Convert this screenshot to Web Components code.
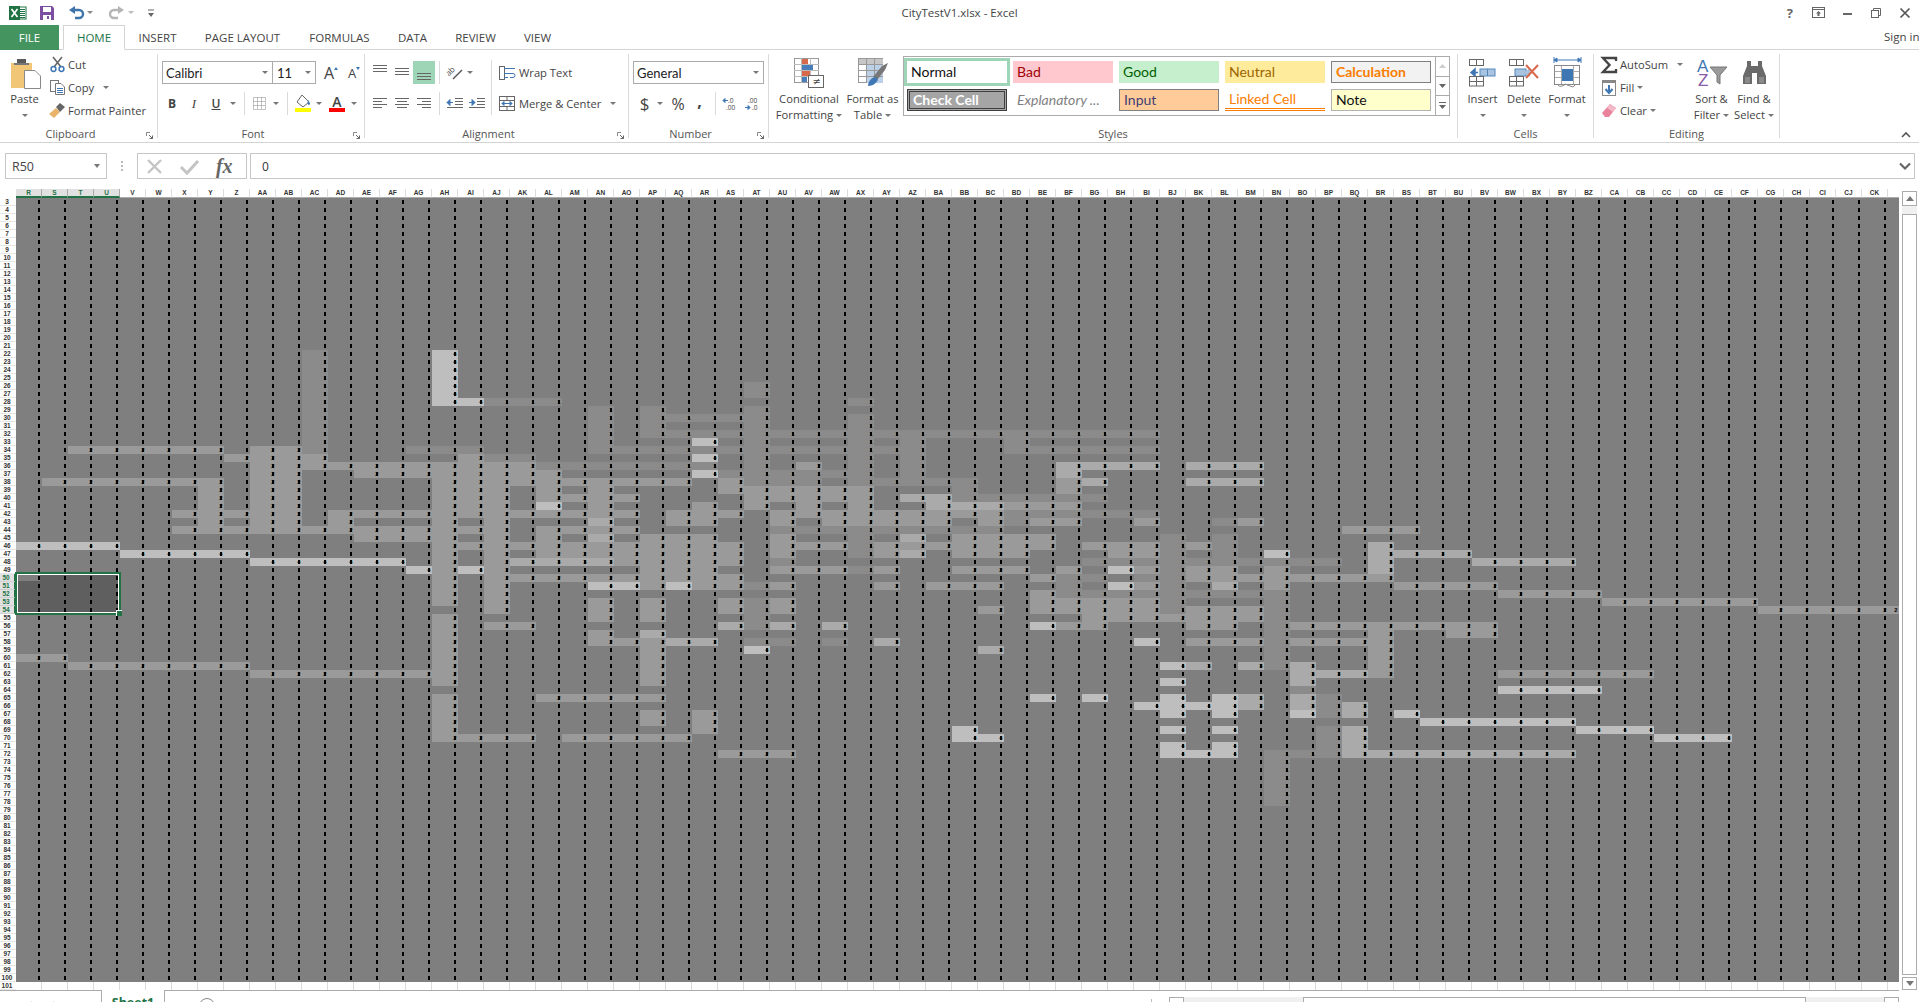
<!DOCTYPE html>
<html lang="en">
<head>
<meta charset="utf-8">
<title>CityTestV1.xlsx - Excel</title>
<style>
html,body{margin:0;padding:0;background:#fff;overflow:hidden;width:1919px;height:1002px}
body{font-family:"Open Sans","Liberation Sans",sans-serif}
</style>
</head>
<body>
<xl-app></xl-app>
<script>
const svg=(w,h,c,st='')=>`<svg width="${w}" height="${h}" viewBox="0 0 ${w} ${h}" style="display:block;overflow:visible;${st}">${c}</svg>`;
const L=(x1,y1,x2,y2,col='#666',sw=1)=>`<line x1="${x1}" y1="${y1}" x2="${x2}" y2="${y2}" stroke="${col}" stroke-width="${sw}"/>`;
const lines=(arr,col='#666')=>arr.map(a=>L(a[0],a[1]+.5,a[2],a[1]+.5,col)).join('');

class XlTitle extends HTMLElement{constructor(){super();this.attachShadow({mode:'open'}).innerHTML=`
<style>
:host{display:grid;grid-template-columns:1fr auto 1fr;align-items:center;height:25px;font:11.5px "Open Sans",sans-serif;color:#444}
.l,.r{display:flex;align-items:center}
.r{justify-content:flex-end}
.t{color:#444}
.car{width:0;height:0;border:3px solid transparent;border-top:3px solid #888;border-bottom:0}
</style>
<div class="l">
 <span style="margin-left:9px">${svg(17,14,`<rect x="7" y="1" width="10" height="12" fill="#fff" stroke="#207245"/>${lines([[9,3,16],[9,5,16],[9,7,16],[9,9,16],[9,11,16]],'#207245')}<rect x="0" y="0" width="11" height="14" fill="#207245"/><path d="M2.5 3l6 8M8.5 3l-6 8" stroke="#fff" stroke-width="1.7"/>`)}</span>
 <span style="margin-left:14px">${svg(14,14,`<path d="M0 0H12L14 2V14H0Z" fill="#7d4fa0"/><rect x="3" y="1" width="8" height="5" fill="#fff"/><rect x="3" y="9" width="8" height="5" fill="#fff"/><rect x="7" y="10" width="2" height="3" fill="#7d4fa0"/>`)}</span>
 <span style="margin-left:15px">${svg(15,14,`<path d="M4 4H10a4 4 0 0 1 0 8H6" fill="none" stroke="#3f74ab" stroke-width="2.4"/><path d="M0 4L6 0V8Z" fill="#3f74ab"/>`)}</span>
 <i class="car" style="margin-left:3px"></i>
 <span style="margin-left:16px">${svg(15,14,`<path d="M11 4H5a4 4 0 0 0 0 8H9" fill="none" stroke="#b5b5b5" stroke-width="2.4"/><path d="M15 4L9 0V8Z" fill="#b5b5b5"/>`)}</span>
 <i class="car" style="margin-left:4px;border-top-color:#bbb"></i>
 <span style="margin-left:14px">${svg(6,8,`${L(0,1,6,1,'#666')}<path d="M0 4H6L3 8Z" fill="#666"/>`)}</span>
</div>
<div class="t">CityTestV1.xlsx - Excel</div>
<div class="r">
 <span style="font-weight:700;font-size:13px;color:#666;margin-right:19px">?</span>
 <span style="margin-right:18px">${svg(13,11,`<rect x=".5" y=".5" width="12" height="10" fill="none" stroke="#666"/>${L(0,2.5,13,2.5)}<path d="M6.5 4L9 6.5H7.5V9H5.5V6.5H4Z" fill="#666"/>`)}</span>
 <span style="margin-right:19px">${svg(9,2,`<rect width="9" height="2" fill="#666"/>`,'margin-top:3px')}</span>
 <span style="margin-right:19px">${svg(10,10,`<rect x=".5" y="2.5" width="7" height="7" fill="#fff" stroke="#666"/><path d="M2.5 2V.5H9.5V7.5H8" fill="none" stroke="#666"/>`)}</span>
 <span style="margin-right:9px">${svg(10,10,`<path d="M.5 .5L9.5 9.5M9.5 .5L.5 9.5" stroke="#555" stroke-width="1.7"/>`)}</span>
</div>`}}

class XlTabs extends HTMLElement{constructor(){super();const tabs=[['INSERT',65],['PAGE LAYOUT',105],['FORMULAS',89],['DATA',57],['REVIEW',69],['VIEW',55]];this.attachShadow({mode:'open'}).innerHTML=`
<style>
:host{display:flex;height:25px;box-sizing:border-box;border-bottom:1px solid #d4d4d4;font:11.5px "Open Sans",sans-serif;color:#444;align-items:stretch}
.tab{display:flex;align-items:center;justify-content:center;height:25px;box-sizing:border-box}
.file{width:59px;background:#43945f;color:#fff}
.home{width:62px;margin-left:4px;border:1px solid #d4d4d4;border-bottom:1px solid #fff;color:#217346;background:#fff}
.sign{margin-left:auto;width:35px;display:flex;align-items:center;white-space:nowrap;font-size:11.5px;margin-top:-2px}
</style>
<div class="tab file">FILE</div><div class="tab home">HOME</div>
${tabs.map(t=>`<div class="tab" style="width:${t[1]}px">${t[0]}</div>`).join('')}
<div class="sign">Sign in</div>`}}

class RbGroup extends HTMLElement{constructor(){super();this.attachShadow({mode:'open'}).innerHTML=`
<style>
:host{display:flex;flex-direction:column;flex:none;box-sizing:border-box;height:84px;border-right:1px solid #dadada;position:relative}
.c{display:flex;height:74px;flex:none;align-items:flex-start}
.lb{height:12px;flex:none;line-height:12px;text-align:center;color:#555;font-size:11px}
:host([launch]) .lb{padding-right:16px}
.launch{position:absolute;right:4px;bottom:-1px}
</style>
<div class="c"><slot></slot></div><div class="lb"></div>
<span class="launch"></span>`;
this.shadowRoot.querySelector('.lb').textContent=this.getAttribute('label')||'';
if(this.hasAttribute('launch'))this.shadowRoot.querySelector('.launch').innerHTML=svg(7,7,`<path d="M.5 4V.5H4" fill="none" stroke="#888"/><path d="M3 3L6.5 6.5M6.5 3.5V6.5H3.5" fill="none" stroke="#666"/>`);
this.style.width=this.getAttribute('w')+'px';}}

const I={
paste:svg(30,30,`<rect x="0" y="4" width="21" height="25" fill="#f1c677"/><rect x="6" y="0" width="9" height="5" fill="#5a5a5a"/><rect x="3" y="4" width="15" height="2" fill="#777"/><path d="M13.5 11.5H24L29.5 17V29.5H13.5Z" fill="#fff" stroke="#888"/>`),
cut:svg(15,15,`<path d="M3 0L11 10M12 0L4 10" stroke="#666" stroke-width="1.6"/><circle cx="3.5" cy="12" r="2.4" fill="none" stroke="#3e77b4" stroke-width="1.5"/><circle cx="11.5" cy="12" r="2.4" fill="none" stroke="#3e77b4" stroke-width="1.5"/>`),
copy:svg(15,15,`<rect x=".5" y=".5" width="8" height="11" fill="#fff" stroke="#777"/><path d="M5.5 3.5H11L14.5 7V14.5H5.5Z" fill="#fff" stroke="#777"/>${lines([[7,8,13],[7,10,13],[7,12,13]],'#3e77b4')}`),
painter:svg(16,15,`<path d="M0 11L7 5L11 9L5 15Z" fill="#eab36a"/><path d="M7 4L11 0L16 4L11 9Z" fill="#666"/>`),
top:svg(14,7,lines([[0,0,14],[0,3,14],[0,6,14]])),
mid:svg(14,7,lines([[0,0,14],[0,3,14],[0,6,14]])),
al:svg(14,11,lines([[0,0,14],[0,3,9],[0,6,14],[0,9,9]])),
ac:svg(14,11,lines([[0,0,14],[2,3,12],[0,6,14],[2,9,12]])),
ar:svg(14,11,lines([[0,0,14],[5,3,14],[0,6,14],[5,9,14]])),
orient:svg(16,15,`<text x="0" y="9" font-family="Open Sans" font-size="8" transform="rotate(-45 4 8)" fill="#555">ab</text><path d="M6 14L15 5" stroke="#555" stroke-width="1.4"/>`),
wrap:svg(16,14,`<rect x=".5" y=".5" width="5" height="13" fill="none" stroke="#666"/>${lines([[5,2,16],[5,7,13],[5,11,9]],'#3e77b4')}<path d="M13 7.5h1a2 2 0 0 1 0 4h-3" fill="none" stroke="#3e77b4"/>`),
merge:svg(16,15,`<rect x=".5" y=".5" width="15" height="14" fill="#fff" stroke="#666"/>${L(0,4.5,16,4.5)}${L(0,10.5,16,10.5)}${L(8,0,8,4)}${L(8,11,8,15)}<path d="M3 7.5H13M3 7.5l2-2v4zM13 7.5l-2-2v4z" stroke="#3e77b4" fill="#3e77b4"/>`),
dec:svg(16,11,`${lines([[8,0,16],[8,3,16],[8,6,16],[0,9,16]])}<path d="M0 4.5H6M0 4.5L3 1.5V7.5Z" stroke="#3e77b4" fill="#3e77b4"/>`),
inc:svg(16,11,`${lines([[8,0,16],[8,3,16],[8,6,16],[0,9,16]])}<path d="M0 4.5H6M6 4.5L3 1.5V7.5Z" stroke="#3e77b4" fill="#3e77b4"/>`),
border:svg(13,13,`<path d="M.5 .5H12.5V12.5H.5Z M.5 4.5H12.5 M.5 8.5H12.5 M4.5 .5V12.5 M8.5 .5V12.5" fill="none" stroke="#888" stroke-dasharray="1 1"/>`),
fill:svg(16,17,`<path d="M7 0L14 7L8 12L2 7Z" fill="#fff" stroke="#666"/><path d="M13 5c2 3 3 4 1 5c-1 0-2-2-1-5Z" fill="#3e77b4"/><rect x="0" y="13" width="16" height="4" fill="#ffff00"/>`),
inc2:svg(15,14,`<text x="5" y="6" font-family="Open Sans" font-size="6.5" fill="#444">.0</text><text x="3" y="13" font-family="Open Sans" font-size="6.5" fill="#444">.00</text><path d="M0 3.5H5M0 3.5L2 1.5V5.5Z" stroke="#3e77b4" fill="#3e77b4"/>`),
dec2:svg(15,14,`<text x="3" y="6" font-family="Open Sans" font-size="6.5" fill="#444">.00</text><text x="7" y="13" font-family="Open Sans" font-size="6.5" fill="#444">.0</text><path d="M0 10.5H5M5 10.5L3 8.5V12.5Z" stroke="#3e77b4" fill="#3e77b4"/>`),
cond:svg(30,30,`<rect x=".5" y=".5" width="24" height="24" fill="#fff" stroke="#999"/>${L(0,6.5,25,6.5,'#bbb')}${L(0,12.5,25,12.5,'#bbb')}${L(0,18.5,25,18.5,'#bbb')}${L(7.5,0,7.5,25,'#bbb')}${L(16.5,0,16.5,25,'#bbb')}<rect x="8" y="1" width="6" height="5" fill="#d8694a"/><rect x="8" y="7" width="11" height="5" fill="#4a7ebb"/><rect x="8" y="13" width="8" height="5" fill="#d8694a"/><rect x="8" y="19" width="5" height="5" fill="#4a7ebb"/><rect x="14.5" y="17.5" width="15" height="12" fill="#fff" stroke="#666"/><text x="18.5" y="27" font-family="DejaVu Sans" font-size="10" fill="#444">≠</text>`),
table:svg(30,29,`<rect x=".5" y=".5" width="24" height="24" fill="#fff" stroke="#999"/><rect x="8" y="7" width="17" height="18" fill="#bcd0e8"/><rect x="1" y="1" width="24" height="6" fill="#c6c6c6"/>${L(0,6.5,25,6.5,'#999')}${L(0,12.5,25,12.5,'#999')}${L(0,18.5,25,18.5,'#999')}${L(8.5,0,8.5,25,'#999')}${L(16.5,0,16.5,25,'#999')}<path d="M15 19L24 8L30 5L27 12L19 22Z" fill="#777"/><path d="M10 28c0-5 4-9 8-9l2 3c-2 3-5 6-10 6Z" fill="#3e77b4"/>`),
insert:svg(27,27,`<rect x=".5" y=".5" width="14" height="6" fill="#fff" stroke="#666"/>${L(7.5,0,7.5,6)}<rect x="11" y="10" width="15" height="7" fill="#a9c4e0" stroke="#5588bb"/>${L(18.5,10,18.5,17,'#5588bb')}<path d="M2 13.5H9M2 13.5L6 10V17Z" stroke="#3e77b4" stroke-width="1.5" fill="#3e77b4"/><rect x=".5" y="17.5" width="14" height="9.5" fill="#fff" stroke="#666"/>${L(7.5,18,7.5,27)}${L(1,22.5,14,22.5)}`),
del:svg(30,27,`<rect x=".5" y=".5" width="14" height="6" fill="#fff" stroke="#666"/>${L(7.5,0,7.5,6)}<rect x="6" y="10" width="11" height="7" fill="#a9c4e0" stroke="#5588bb"/><path d="M15 13.5L21 9V18Z" fill="#a9c4e0"/><rect x=".5" y="17.5" width="14" height="9.5" fill="#fff" stroke="#666"/>${L(7.5,18,7.5,27)}${L(1,22.5,14,22.5)}<path d="M17 6L29 19M29 6L17 19" stroke="#d8694a" stroke-width="2"/>`),
fmt:svg(29,31,`<path d="M1 3H28M1 0V6M28 0V6M1 3l3-2v4zM28 3l-3-2v4z" stroke="#3e77b4" fill="#3e77b4"/><rect x="1.5" y="8.5" width="25" height="19" fill="#fff" stroke="#888"/>${L(2,14.5,26,14.5,'#aaa')}${L(2,20.5,26,20.5,'#aaa')}${L(8.5,9,8.5,27,'#aaa')}${L(20.5,9,20.5,27,'#aaa')}<rect x="9" y="12" width="11" height="12" fill="#3e77b4"/><path d="M5 28c2 3 6 0 8-1" fill="none" stroke="#888"/><path d="M14 28l6 2l3-3" fill="none" stroke="#888"/>`),
sigma:svg(16,16,`<path d="M15 4V1H2L8.5 8L2 15H15V12" fill="none" stroke="#444" stroke-width="2.4"/>`),
filld:svg(14,16,`<rect x=".5" y=".5" width="13" height="15" fill="#fff" stroke="#888"/><rect x="0" y="0" width="14" height="3" fill="#888"/><path d="M7 5V12M3.5 9L7 13L10.5 9" fill="none" stroke="#3e77b4" stroke-width="2"/>`),
erase:svg(14,15,`<path d="M0 10L8 1L14 5L7 14H3Z" fill="#e9839c"/><path d="M8 1L14 5L11 9L5 5Z" fill="#f3b8c6"/>`),
sort:svg(30,27,`<text x="0" y="13" font-family="Liberation Sans" font-size="17" fill="#3e77b4">A</text><text x="1" y="27" font-family="Liberation Sans" font-size="17" fill="#8a5aa8">Z</text><path d="M13 8H30L23 16V25L20 23V16Z" fill="#9a9a9a" stroke="#777"/>`),
find:svg(27,23,`<path d="M6 0H10V5H17V0H21V5L25 15V23H16V12H11V23H2V15L6 5Z" fill="#6a6a6a"/><rect x="4" y="16" width="5" height="6" fill="#8a8a8a"/><rect x="18" y="16" width="5" height="6" fill="#8a8a8a"/>`)
};

class XlRibbon extends HTMLElement{constructor(){super();
const cell=(w,c,st='')=>`<span class="cell" style="width:${w}px;${st}">${c}</span>`;
const car=(w=8)=>cell(w,'<i class="car"></i>');
const sep=(w,h=23)=>cell(w,`<i class="sep" style="height:${h}px"></i>`);
const big=(w,ic,a,b)=>`<div class="big" style="width:${w}px"><div class="ic">${ic}</div><div class="t">${a}</div><div class="t">${b||''}</div></div>`;
const st=(cls,txt)=>`<div class="st ${cls}">${txt}</div>`;
this.attachShadow({mode:'open'}).innerHTML=`
<style>
:host{display:flex;height:93px;box-sizing:border-box;border-bottom:1px solid #d4d4d4;padding-top:4px;font:11.2px "Open Sans",sans-serif;color:#444;position:relative}
.cell{display:flex;align-items:center;justify-content:center;flex:none;height:23px}
.car{display:inline-block;width:0;height:0;border:3px solid transparent;border-top:3px solid #777;border-bottom:0}
.sep{display:block;width:1px;background:#dadada}
.col{display:flex;flex-direction:column;flex:none}
.rw{display:flex;align-items:center;height:23px}
.up{margin-top:-1px}
.tx{white-space:nowrap}
.big{display:flex;flex-direction:column;align-items:center;flex:none}
.ic{height:37px;display:flex;align-items:center;justify-content:center}
.t{height:16px;line-height:16px;white-space:nowrap;display:flex;align-items:center;gap:3px}
.combo{box-sizing:border-box;height:23px;border:1px solid #ababab;display:flex;align-items:center;justify-content:space-between;padding:0 4px 0 3px;background:#fff;font-family:"Lato",sans-serif;font-size:13px;color:#222}
.gal{display:flex;flex:none;box-sizing:border-box;width:547px;height:60px;border:1px solid #ababab;margin-top:2px}
.grid{display:grid;grid-template-columns:repeat(5,100px);grid-template-rows:22px 22px;column-gap:6px;row-gap:6px;padding:4px 0 0 3px;font:14px "Lato",sans-serif}
.st{box-sizing:border-box;display:flex;align-items:center;padding:0 0 2px 4px;white-space:nowrap;overflow:hidden}
.normal{outline:3px solid #9fd5b7;color:#111;background:#fff}
.bad{background:#ffc7ce;color:#9c0006}
.good{background:#c6efce;color:#006100}
.neutral{background:#ffeb9c;color:#9c6500}
.calc{background:#f2f2f2;color:#fa7d00;font-weight:700;border:1px solid #7f7f7f}
.check{background:#a5a5a5;color:#fff;font-weight:700;border:3px double #3f3f3f;padding-left:3px}
.expl{color:#7f7f7f;font-style:italic}
.input{background:#ffcc99;color:#3f3f76;border:1px solid #7f7f7f}
.linked{color:#fa7d00;border-bottom:3px double #fa7d00;padding-bottom:0}
.note{background:#ffc;color:#111;border:1px solid #b2b2b2}
.scr{margin-left:auto;width:14px;display:flex;flex-direction:column;border-left:1px solid #ababab;box-sizing:border-box}
.scr span{flex:1;display:flex;align-items:center;justify-content:center;border-bottom:1px solid #ababab}
.scr span:last-child{border:0}
.chev{position:absolute;right:8px;bottom:4px}
.tri{position:absolute;width:0;height:0;border:2.5px solid transparent;border-bottom:3px solid #3e77b4;border-top:0;right:-4px;top:2px}
.trd{position:absolute;width:0;height:0;border:2.5px solid transparent;border-top:3px solid #3e77b4;border-bottom:0;right:-4px;top:2px}
</style>
<rb-group label="Clipboard" w="158" launch>
 <div class="big" style="width:49px"><div class="ic" style="margin-top:2px;height:35px;padding-left:3px">${I.paste}</div><div class="t">Paste</div><div class="t"><i class="car"></i></div></div>
 <div class="col up">
  <div class="rw">${cell(16,I.cut)}<span class="tx" style="margin-left:3px">Cut</span></div>
  <div class="rw">${cell(16,I.copy)}<span class="tx" style="margin-left:3px">Copy</span><i class="car" style="margin-left:9px"></i></div>
  <div class="rw">${cell(16,I.painter)}<span class="tx" style="margin-left:3px">Format Painter</span></div>
 </div>
</rb-group>
<rb-group label="Font" w="207" launch>
 <div class="col" style="padding:7px 0 0 4px">
  <div class="rw">
   <div class="combo" style="width:111px"><span>Calibri</span><i class="car"></i></div>
   <div class="combo" style="width:43px;border-left:0;padding-left:4px"><span>11</span><i class="car"></i></div>
   ${cell(14,`<span style="font-size:16px;position:relative;line-height:16px">A<i class="tri"></i></span>`,'margin-left:6px')}
   ${cell(14,`<span style="font-size:13px;position:relative;line-height:16px">A<i class="trd"></i></span>`,'margin-left:9px')}
  </div>
  <div class="rw" style="margin:8px 0 0 -1px">
   ${cell(22,'<b style="font-size:12px">B</b>')}${cell(22,'<i style="font:italic 13px Liberation Serif">I</i>')}${cell(22,'<u style="font-size:12px;font-weight:600">U</u>')}${car(12)}${sep(10)}
   ${cell(20,I.border)}${car(14)}${sep(8)}${cell(24,I.fill)}${car(8)}
   ${cell(28,`<span style="display:flex;flex-direction:column;align-items:center;line-height:13px;font-size:14px;font-weight:600">A<i style="display:block;width:16px;height:4px;background:#ff0000"></i></span>`)}${car(5)}
  </div>
 </div>
</rb-group>
<rb-group label="Alignment" w="264" launch>
 <div class="col" style="padding:7px 0 0 4px;width:119px">
  <div class="rw">${cell(22,I.top,'align-items:flex-start;padding-top:4px;box-sizing:border-box')}${cell(22,I.mid,'align-items:flex-start;padding-top:7px;box-sizing:border-box')}${cell(22,I.top,'align-items:flex-end;padding-bottom:4px;box-sizing:border-box;background:#9fd5b7')}${sep(9)}${cell(22,I.orient)}${car(8)}</div>
  <div class="rw" style="margin-top:8px">${cell(22,I.al)}${cell(22,I.ac)}${cell(22,I.ar)}${sep(9)}${cell(22,I.dec)}${cell(22,I.inc)}</div>
 </div>
 <div style="margin:6px 0 0 3px;width:1px;height:55px;background:#dadada;flex:none"></div>
 <div class="col" style="padding:7px 0 0 7px">
  <div class="rw">${cell(16,I.wrap)}<span class="tx" style="margin-left:4px">Wrap Text</span></div>
  <div class="rw" style="margin-top:8px">${cell(16,I.merge)}<span class="tx" style="margin-left:4px">Merge &amp; Center</span><i class="car" style="margin-left:9px"></i></div>
 </div>
</rb-group>
<rb-group label="Number" w="140" launch>
 <div class="col" style="padding:7px 0 0 4px">
  <div class="rw"><div class="combo" style="width:131px"><span>General</span><i class="car"></i></div></div>
  <div class="rw" style="margin-top:8px">${cell(23,'<span style="font-size:17px;line-height:20px">$</span>')}${car(8)}${cell(28,'<span style="font-size:16px;line-height:20px">%</span>')}${cell(15,'<b style="font-size:16px;line-height:10px;margin-top:-6px">,</b>')}${sep(16)}${cell(14,I.inc2)}<span style="width:8px"></span>${cell(15,I.dec2)}</div>
 </div>
</rb-group>
<rb-group label="Styles" w="689">
 <span style="width:7px;flex:none"></span>
 ${big(66,I.cond,'Conditional','Formatting <i class="car"></i>')}
 ${big(61,I.table,'Format as','Table <i class="car"></i>')}
 <div class="gal">
  <div class="grid">
   ${st('normal','Normal')}${st('bad','Bad')}${st('good','Good')}${st('neutral','Neutral')}${st('calc','Calculation')}
   ${st('check','Check Cell')}${st('expl','Explanatory ...')}${st('input','Input')}${st('linked','Linked Cell')}${st('note','Note')}
  </div>
  <div class="scr">
   <span>${svg(7,4,`<path d="M0 4L3.5 0L7 4Z" fill="#ccc"/>`)}</span>
   <span>${svg(7,4,`<path d="M0 0L3.5 4L7 0Z" fill="#666"/>`)}</span>
   <span>${svg(7,7,`<rect width="7" height="1" fill="#666"/><path d="M0 3L3.5 7L7 3Z" fill="#666"/>`)}</span>
  </div>
 </div>
</rb-group>
<rb-group label="Cells" w="136">
 <span style="width:4px;flex:none"></span>
 ${big(41,I.insert,'Insert','<i class="car"></i>')}
 ${big(42,I.del,'Delete','<i class="car"></i>')}
 ${big(44,I.fmt,'Format','<i class="car"></i>')}
</rb-group>
<rb-group label="Editing" w="186">
 <div class="col up" style="padding-left:7px;width:90px;box-sizing:content-box">
  <div class="rw">${cell(16,I.sigma)}<span class="tx" style="margin-left:3px">AutoSum</span><i class="car" style="margin-left:9px"></i></div>
  <div class="rw">${cell(16,I.filld)}<span class="tx" style="margin-left:3px">Fill</span><i class="car" style="margin-left:3px"></i></div>
  <div class="rw">${cell(16,I.erase)}<span class="tx" style="margin-left:3px">Clear</span><i class="car" style="margin-left:3px"></i></div>
 </div>
 ${big(41,I.sort,'Sort &amp;','Filter <i class="car"></i>')}
 ${big(44,I.find,'Find &amp;','Select <i class="car"></i>')}
</rb-group>
<span class="chev">${svg(10,6,`<path d="M1 5L5 1L9 5" fill="none" stroke="#555" stroke-width="1.6"/>`)}</span>`}}

class XlFormula extends HTMLElement{constructor(){super();this.attachShadow({mode:'open'}).innerHTML=`
<style>
:host{display:flex;height:46px;box-sizing:border-box;padding:10px 4px 10px 5px;font:12px "Open Sans",sans-serif;color:#444}
.box{box-sizing:border-box;height:26px;border:1px solid #c6c6c6;display:flex;align-items:center;background:#fff}
.name{width:102px;padding:0 6px 0 6px;justify-content:space-between;font-size:12.5px}
.car{width:0;height:0;border:3.5px solid transparent;border-top:4px solid #777;border-bottom:0}
.dots{width:30px;flex:none;display:flex;justify-content:center;align-items:center}
.fx{width:110px;justify-content:space-around;padding:0 5px 0 0;box-sizing:border-box}
.inp{flex:1;margin-left:3px;padding-left:11px;justify-content:space-between;padding-right:3px;color:#333}
</style>
<div class="box name"><span>R50</span><i class="car"></i></div>
<div class="dots">${svg(2,10,`<rect width="2" height="2" fill="#bbb"/><rect y="4" width="2" height="2" fill="#bbb"/><rect y="8" width="2" height="2" fill="#bbb"/>`)}</div>
<div class="box fx">
 ${svg(17,17,`<path d="M2 2L15 15M15 2L2 15" stroke="#c4c4c4" stroke-width="2.4"/>`)}
 ${svg(19,15,`<path d="M1 8L7 14L18 2" fill="none" stroke="#c4c4c4" stroke-width="3"/>`)}
 <span style="font:italic 700 20px 'Liberation Serif',serif;color:#666;line-height:20px">fx</span>
</div>
<div class="box inp"><span>0</span>${svg(12,8,`<path d="M1 1.5L6 6.5L11 1.5" fill="none" stroke="#666" stroke-width="2.2"/>`)}</div>`}}

const C={
0:"46:4 60:2",1:"38:2 46:4 60:2",2:"34:2 38:2 46:4 61:2",3:"34:2 38:2 46:4 61:2",4:"34:2 38:2 47:4 61:2",5:"34:2 38:2 47:4 61:2",
6:"34:2 38:2 42:2 44:2 47:4 61:2",7:"34:2 38-44:2 47:4 61:2",8:"35:2 42:2 44:2 47:4 61:2",9:"34-44:2 48:4 62:2",10:"34-44:2 48:4 62:2",
11:"22-34:1 35-36:2 44:2 48:4 62:2",12:"36:2 42-44:2 48:4 62:2",13:"36-37:2 42:2 44-45:2 48:4 62:2",14:"36-37:2 42:2 44-45:2 48:4 62:2",
15:"34:1 36-37:2 42:2 44-45:2 49:4 62:2",16:"22-28:4 34:1 36-53:2 55-63:2 65-70:2",17:"28:4 34:1 35-42:2 44:2 46:2 49:4 70:2",
18:"28:1 35:1 36-54:2 56:2 70:2",19:"28:1 35:1 36-38:2 42:2 46:2 48:3 50:2 56:2 70:2",20:"28:1 36:1 37-40:2 41:4 42:2 44-47:2 48:3 50:2 65:2",
21:"36:1 38:2 40:2 42:2 44:2 46-47:2 48:3 50:2 65:2 70:2",22:"29-34:1 36:1 38-42:2 43:3 44:2 45:3 46-47:2 48:3 50:2 51:4 53-55:2 57-58:2 65:2 70:2",
23:"34:1 36:1 38:2 40:2 42:2 44:2 46-48:2 50:2 51:4 58:2 65:2 70:2",24:"29-32:1 34:1 36:1 38:2 45-51:2 53-55:2 57:3 58-63:2 65:2 67-68:2 70:2",
25:"30:1 32:1 34:1 36:1 38:2 42-43:2 45-50:2 51:4 58:3 70:2",26:"30:1 32:1 33:4 34:1 35:4 36:1 37:4 41-43:2 45-51:2 58:3 67-69:2",
27:"30:1 32:1 34:1 37:1 38-39:2 42:2 46-48:2 50-51:2 53-54:2 56:3 72:2",28:"26-27:1 29-38:1 39-41:2 51:1 53-56:1 58:1 59:4 72:2",
29:"32:1 34:1 37-38:1 39-40:2 42-43:2 44:1 45-47:2 48:1 49:2 51:2 53-54:2 56:3 58:1 72:2",30:"32:1 34:1 36:2 37-38:1 39-42:2 44:1 46:2 49:2",
31:"32:1 34:1 37:1 39-40:2 42-43:2 44:1 46:2 49:2 56:3 58:1",32:"28:1 30-38:1 39-43:2 44-47:1 49:1",33:"32:1 34:1 38:1 42-43:2 44:1 46-47:2 49:2 51:2 58:3",
34:"32-38:1 40:3 42-43:2 44:1 45:3 46:2 47:3",35:"32:1 38:1 40-41:3 42-43:2 44:1 46:2 51:2"};
const R={
32:"36-43:1",33:"38:1",34:"38-43:1",36:"40-43:3 45-47:3",37:"40:3",38:"36:1 40:2 41:3 45-47:3",39:"36:1 40:2",40:"36-41:1",41:"36-37:3 38-40:2",
42:"36-37:2 38-43:1",43:"37:2 38:1 39-40:2 43:2 46:1 47:2",44:"36-37:1 51-53:2",45:"36-39:2 44:1 46:1",46:"36-39:2 41-43:2 44:1 45:2 46:1 52:3",
47:"36-38:2 42-43:2 44:1 46:1 48:4 52:3 53-55:3",48:"41-50:1 52:3 56-59:3",49:"36-38:2 40:2 42:4 43:2 44:1 45-46:2 48:2 52:3",
50:"39:2 40-41:1 43:1 44:1 45-52:2",51:"36-37:2 40:1 42:4 43:2 44:1 46:3 48:2 53-56:2",52:"39:2 40-48:1 57-60:2",53:"39-43:2 44:1 48:1 61-66:2",
54:"37:2 39-43:2 44:1 45-47:2 48:1 67-72:2",55:"41-43:2 44:2 45-47:2 48:1",56:"39:4 40-41:2 45-46:2 48:1 49-56:2",57:"48:1 52:2 55-56:2",
58:"43:4 45-47:2 48:1 49-52:2",59:"37:3 48:1 52:2",60:"48:1 52:2",61:"44:4 45:3 47:3 48:1 49:3 52:2",62:"49-51:3 52:2 57-62:2",63:"44:4 49:3",64:"49:1 57-60:4",
65:"39:4 41:4 44:4 46:4 47:3 49:3 50:1",66:"43:4 44-46:4 47:3 49:3 50:1 51:3",67:"44:4 46:4 49:4 50:1 51:3 53:4",68:"54-59:4",69:"36:4 44:4 46:4 50:1 51:3 60-62:4",
70:"36-37:4 50:1 51:3 63-65:4",71:"44:4 46:4 50:1 51:3",72:"44-46:4 48-50:1 51-59:3",73:"48:1",74:"48:1",75:"48:1",76:"48:1",77:"48:1",78:"48:1"};

const colName=n=>{let s='';while(n>0){const m=(n-1)%26;s=String.fromCharCode(65+m)+s;n=(n-m-1)/26}return s};

class XlSheet extends HTMLElement{constructor(){super();
const cells=new Map();
const span=s=>{const p=s.split('-').map(Number);return p.length>1?[p[0],p[1]]:[p[0],p[0]]};
for(const c in C)for(const e of C[c].split(' ')){const [a,v]=e.split(':');const [r1,r2]=span(a);for(let r=r1;r<=r2;r++)cells.set(r+'_'+c,+v)}
for(const r in R)for(const e of R[r].split(' ')){const [a,v]=e.split(':');const [c1,c2]=span(a);for(let c=c1;c<=c2;c++)cells.set(r+'_'+c,+v)}
let h='';
for(let c=0;c<72;c++){h+=`<span class="ch${c<4?' on':''}" style="grid-column:${c+2};grid-row:1">${colName(18+c)}</span>`}
h+=`<span class="ch" style="grid-column:74;grid-row:1;border-right:0"></span>`;
for(let r=3;r<=101;r++){h+=`<span class="rh${r>=50&&r<=54?' on':''}" style="grid-row:${r-1};grid-column:1">${r}</span>`}
h+=`<div class="bg" style="grid-column:2/75;grid-row:2/100"></div><div class="dash" style="grid-column:2/74;grid-row:2/100"></div><div class="last" style="grid-column:2/75;grid-row:100"></div>`;
for(const [k,v] of cells){const [r,c]=k.split('_').map(Number);h+=`<span class="cl v${v}" style="grid-row:${r-1};grid-column:${c+2}">${v}</span>`}
h+=`<div class="seltint" style="grid-column:2/6;grid-row:49/54"></div><div class="act" style="grid-column:2;grid-row:49"></div><div class="sel" style="grid-column:2/6;grid-row:49/54"><i class="hd"></i></div>`;
this.attachShadow({mode:'open'}).innerHTML=`
<style>
:host{display:flex;height:801px;flex:none}
.g{display:grid;width:1899px;grid-template-columns:16px repeat(72,26px) 11px;grid-template-rows:9px repeat(99,8px);font:700 6.5px/8px "Liberation Sans",sans-serif;color:#333;position:relative}
.ch{background:#fff;text-align:center;border-right:1px solid #dcdcdc;border-bottom:1px solid #ababab;box-sizing:border-box;height:9px;line-height:8px}
.ch.on{background:#e1e1e1;color:#217346;border-bottom:2px solid #217346;border-right:1px solid #ababab}
.rh{background:#fff;text-align:center;padding-right:2px;box-sizing:border-box;border-bottom:1px solid #e6e6e6;height:8px;line-height:7.5px;overflow:hidden}
.rh.on{background:#e1e1e1;color:#217346;border-right:2px solid #217346;border-bottom:1px solid #cfcfcf}
.bg{background:#7f7f7f}
.dash{background:repeating-linear-gradient(90deg,transparent 0 22px,#000 22px 24px,transparent 24px 26px);-webkit-mask:repeating-linear-gradient(180deg,transparent 0 2px,#000 2px 6px,transparent 6px 8px);mask:repeating-linear-gradient(180deg,transparent 0 2px,#000 2px 6px,transparent 6px 8px)}
.last{background:repeating-linear-gradient(90deg,#fff 0 25px,#dcdcdc 25px 26px)}
.cl{font:700 6px/8px "Liberation Sans",sans-serif;color:#000;text-align:right;padding-right:1.5px;box-sizing:border-box;overflow:hidden;height:8px}
.v1{background:#8b8b8b}.v2{background:#9a9a9a}.v3{background:#aaa}.v4{background:#bebebe}
.seltint{background:rgba(0,0,0,.25)}
.act{background:#7f7f7f;margin:1px 2px 1px 1px}
.sel{box-sizing:border-box;margin:-2px -1px -1px -1px;border:2px solid #217346;box-shadow:inset 0 0 0 1px #fff;position:relative;pointer-events:none}
.hd{position:absolute;right:-3px;bottom:-3px;width:5px;height:5px;background:#217346;border:1px solid #fff;border-right:0;border-bottom:0;display:block}
.sb{width:20px;flex:none;display:flex;flex-direction:column;padding-top:2px;box-sizing:border-box;align-items:center}
.sb div{box-sizing:border-box;width:15px;flex:none;margin-left:1px}
.btn{height:15px;border:1px solid #ababab;background:#fff;display:flex;align-items:center;justify-content:center}
.tr{height:8px;background:#f0f0f0}
.th{height:761px;border:1px solid #ababab;background:#fff}
.dn{height:13px;margin-top:2px}
</style>
<div class="g">${h}</div>
<div class="sb"><div class="btn">${svg(8,5,`<path d="M0 5L4 0L8 5Z" fill="#777"/>`)}</div><div class="tr"></div><div class="th"></div><div class="btn dn">${svg(8,5,`<path d="M0 0L4 5L8 0Z" fill="#777"/>`)}</div></div>`}}

class XlBottom extends HTMLElement{constructor(){super();this.attachShadow({mode:'open'}).innerHTML=`
<style>
:host{display:flex;height:12px;overflow:hidden;box-sizing:border-box;flex:none;align-items:flex-start;background:#fff}
.nav{width:101px;display:flex;box-sizing:border-box;padding:10px 0 0 28px;gap:21px;flex:none;border-top:1px solid #ababab;height:12px}
.tab{box-sizing:border-box;width:64px;height:22px;flex:none;border-left:1px solid #ababab;border-right:1px solid #ababab;text-align:center;font:700 12.5px/22px "Open Sans",sans-serif;color:#217346;padding-top:2px}
.rest{flex:1;display:flex;align-items:flex-start;border-top:1px solid #ababab;height:12px;box-sizing:border-box;margin-right:20px}
.plus{margin:7px 0 0 34px;flex:none}
.dots{margin:8px 0 0 auto;width:1px;height:8px;background:#bbb;flex:none}
.hs{margin:6px 0 0 17px;width:730px;display:flex;height:20px;background:#f0f0f0;flex:none}
.hs div{box-sizing:border-box;height:20px;border:1px solid #ababab;background:#fff;flex:none}
.lb,.rb{width:15px}
.thumb{width:503px;margin-left:119px;margin-right:78px}
</style>
<div class="nav">${svg(4,6,`<path d="M0 3L4 0V6Z" fill="#ccc"/>`)}${svg(4,6,`<path d="M4 3L0 0V6Z" fill="#ccc"/>`)}</div>
<div class="tab">Sheet1</div>
<div class="rest">
 <div class="plus">${svg(16,16,`<circle cx="8" cy="8" r="7.5" fill="#fff" stroke="#888"/><path d="M8 4V12M4 8H12" stroke="#888"/>`)}</div>
 <div class="dots"></div>
 <div class="hs"><div class="lb"></div><div class="thumb"></div><div class="rb"></div></div>
</div>`}}

class XlApp extends HTMLElement{constructor(){super();this.attachShadow({mode:'open'}).innerHTML=`
<style>
:host{display:flex;flex-direction:column;width:1919px;height:1002px;overflow:hidden;background:#fff}
</style>
<xl-title></xl-title><xl-tabs></xl-tabs><xl-ribbon></xl-ribbon><xl-formula></xl-formula><xl-sheet></xl-sheet><xl-bottom></xl-bottom>`}}

customElements.define('xl-title',XlTitle);
customElements.define('xl-tabs',XlTabs);
customElements.define('rb-group',RbGroup);
customElements.define('xl-ribbon',XlRibbon);
customElements.define('xl-formula',XlFormula);
customElements.define('xl-sheet',XlSheet);
customElements.define('xl-bottom',XlBottom);
customElements.define('xl-app',XlApp);
</script>
</body>
</html>
